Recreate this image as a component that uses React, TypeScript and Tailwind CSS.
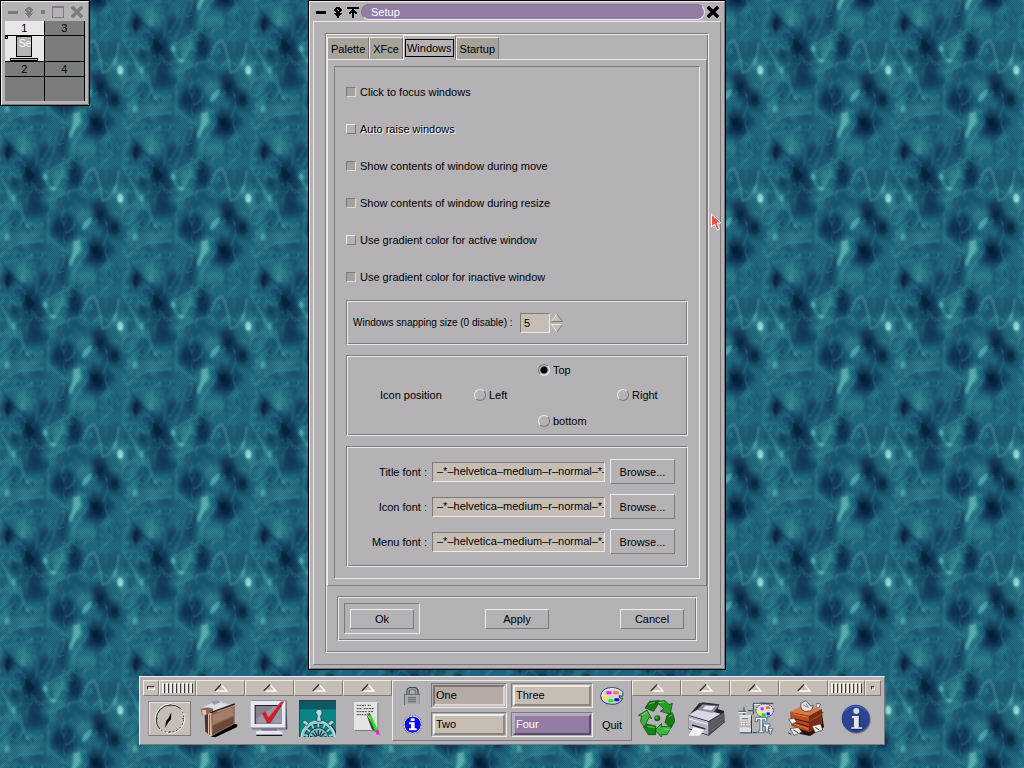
import React from "react";

const etched =
  "border border-t-[#7b797b] border-l-[#7b797b] border-r-[#efebe7] border-b-[#efebe7] shadow-[inset_1px_1px_0_#efebe7,inset_-1px_-1px_0_#7b797b]";
const raised =
  "border border-t-[#efebe7] border-l-[#efebe7] border-r-[#7b797b] border-b-[#7b797b]";
const sunken =
  "border border-t-[#7b797b] border-l-[#7b797b] border-r-[#efebe7] border-b-[#efebe7]";

/* ---------- wallpaper ---------- */

const offsets = [-384, 0, 384];

function Wallpaper() {
  return (
    <svg className="absolute inset-0 h-full w-full" aria-hidden="true">
      <defs>
        <filter id="soft" x="-20%" y="-20%" width="140%" height="140%">
          <feGaussianBlur stdDeviation="10" />
        </filter>
        <filter id="mid" x="-20%" y="-20%" width="140%" height="140%">
          <feGaussianBlur stdDeviation="7" />
        </filter>
        <filter id="fine" x="-20%" y="-20%" width="140%" height="140%">
          <feGaussianBlur stdDeviation="3.5" />
        </filter>
        <filter id="mottle" filterUnits="userSpaceOnUse" x="0" y="0" width="128" height="128" colorInterpolationFilters="sRGB">
          <feTurbulence type="turbulence" baseFrequency=".047 .031" numOctaves="3" seed="8" stitchTiles="stitch" />
          <feColorMatrix values="0 0 0 0 .27  0 0 0 0 .66  0 0 0 0 .67  -5 0 0 0 1" />
        </filter>
        <filter id="shade" filterUnits="userSpaceOnUse" x="0" y="0" width="128" height="128" colorInterpolationFilters="sRGB">
          <feTurbulence type="fractalNoise" baseFrequency=".063 .047" numOctaves="3" seed="3" stitchTiles="stitch" />
          <feColorMatrix values="0 0 0 0 .03  0 0 0 0 .16  0 0 0 0 .28  5 0 0 0 -2.3" />
        </filter>
        <g id="tileDark" fill="#10365a">
          <ellipse cx="24" cy="72" rx="20" ry="30" />
          <path d="M60 85 L110 95 L130 140 L125 225 L90 215 L70 150Z" />
          <path d="M228 85 L255 130 L240 180 L205 175 L200 130Z" />
          <path d="M165 260 L225 255 L230 330 L190 350 L150 310Z" />
          <path d="M265 220 L310 215 L345 270 L370 310 L340 335 L290 290Z" />
          <ellipse cx="290" cy="5" rx="38" ry="26" />
          <ellipse cx="290" cy="365" rx="42" ry="28" />
          <path d="M60 210 L130 220 L150 250 L90 270Z" />
          <path d="M120 45 L150 50 L140 110 L110 90Z" />
          <ellipse cx="345" cy="65" rx="16" ry="22" opacity=".7" />
          <ellipse cx="345" cy="150" rx="12" ry="30" opacity=".7" />
          <ellipse cx="115" cy="352" rx="26" ry="14" opacity=".7" />
          <ellipse cx="190" cy="45" rx="14" ry="40" />
          <ellipse cx="45" cy="165" rx="18" ry="22" />
          <ellipse cx="40" cy="270" rx="16" ry="22" opacity=".7" />
        </g>
        <g id="tileBlack" fill="#041a2e">
          <ellipse cx="23" cy="72" rx="10" ry="18" />
          <path d="M74 112 L94 124 L108 142 L98 166 L84 158 L72 132Z" />
          <ellipse cx="225" cy="135" rx="10" ry="26" opacity=".5" />
          <ellipse cx="343" cy="298" rx="11" ry="14" />
          <path d="M290 244 L308 248 L316 268 L306 284 L288 270Z" opacity=".6" />
          <path d="M270 356 L296 350 L308 372 L304 396 L280 390Z" />
          <ellipse cx="180" cy="300" rx="12" ry="22" opacity=".3" />
        </g>
        <g id="tileLight" fill="#328a92">
          <path d="M130 140 L215 88 L185 150 L160 192 L140 175Z" />
          <path d="M50 25 L90 15 L100 60 L70 80 L50 55Z" />
          <path d="M205 0 L235 0 L245 50 L275 40 L290 70 L220 80Z" opacity=".9" />
          <path d="M215 245 L265 240 L275 265 L235 285Z" opacity=".8" />
          <path d="M335 190 L380 180 L384 240 L345 262 L318 235Z" />
          <ellipse cx="318" cy="140" rx="11" ry="24" opacity=".8" />
          <ellipse cx="22" cy="325" rx="16" ry="30" />
          <ellipse cx="345" cy="70" rx="7" ry="20" opacity=".7" />
          <path d="M210 384 L220 335 L245 330 L260 384Z" />
          <path d="M0 265 L45 220 L10 290Z" />
          <path d="M55 355 L120 325 L100 290 L60 310Z" opacity=".8" />
          <path d="M20 190 L60 200 L70 235 L40 240Z" opacity=".7" />
          <path d="M130 200 L200 195 L170 235 L130 260Z" opacity=".4" />
        </g>
        <g id="tileLines" fill="none" stroke="#46a3a5" strokeWidth="6" strokeLinecap="round">
          <path d="M133 140 C140 165 150 180 160 184 C172 172 180 150 190 130" />
          <path d="M130 138 C155 125 185 112 218 86" opacity=".6" />
          <path d="M250 165 C262 130 270 122 282 122 C296 130 300 190 308 218 C325 218 335 200 350 170 L356 130" />
          <path d="M5 150 C15 165 20 200 45 218" opacity=".8" />
          <path d="M62 225 C65 255 70 280 88 300" opacity=".5" />
          <path d="M0 384 C30 350 60 340 130 338" opacity=".7" />
          <path d="M146 345 C140 300 150 280 146 270 M150 330 C165 350 195 365 212 380" opacity=".5" />
          <path d="M160 215 C190 190 220 190 250 178" opacity=".5" />
          <path d="M0 30 C25 15 60 5 110 5 C150 10 150 20 152 45" opacity=".3" />
          <path d="M175 15 C165 50 160 80 145 110" opacity=".4" />
          <path d="M100 45 C120 60 110 85 108 110" opacity=".4" />
          <path d="M370 55 C376 80 366 100 372 120" opacity=".5" />
          <path d="M320 20 C300 50 280 50 275 90" opacity=".3" />
          <path d="M0 320 C15 300 30 290 45 270" opacity=".5" />
        </g>
        <g id="tileBright" fill="#6cc9c4">
          <ellipse cx="361" cy="211" rx="9" ry="14" fill="#a4f4e8" />
          <ellipse cx="260" cy="287" rx="8" ry="23" transform="rotate(38 260 287)" opacity=".7" />
          <ellipse cx="217" cy="10" rx="7" ry="22" transform="rotate(20 217 10)" opacity=".8" />
          <path d="M220 340 L240 335 L242 365 L228 388 L220 388Z" opacity=".8" />
          <ellipse cx="136" cy="146" rx="5" ry="9" opacity=".8" />
          <ellipse cx="160" cy="182" rx="9" ry="5" opacity=".8" />
          <ellipse cx="346" cy="184" rx="4" ry="13" transform="rotate(15 346 184)" opacity=".7" />
          <ellipse cx="40" cy="210" rx="6" ry="10" opacity=".5" />
          <ellipse cx="22" cy="326" rx="6" ry="12" opacity=".6" />
          <ellipse cx="82" cy="292" rx="5" ry="6" opacity=".5" />
          <ellipse cx="68" cy="68" rx="7" ry="12" opacity=".3" />
        </g>
        <pattern id="water" width="128" height="128" patternUnits="userSpaceOnUse">
          <rect width="128" height="128" fill="#226a82" />
          <g transform="scale(.33333)">
            {[
              ["tileDark", "soft", 0.85],
              ["tileLight", "soft", 0.9],
            ].map(([id, filter, opacity]) => (
              <g key={id} filter={`url(#${filter})`} opacity={opacity}>
                {offsets.map((x) =>
                  offsets.map((y) => <use key={`${x} ${y}`} href={`#${id}`} x={x} y={y} />)
                )}
              </g>
            ))}
          </g>
          <rect width="128" height="128" filter="url(#shade)" opacity=".28" />
          <rect width="128" height="128" filter="url(#mottle)" opacity=".3" />
          <g transform="scale(.33333)">
            {[
              ["tileBlack", "mid", 0.9],
              ["tileLines", "fine", 0.7],
              ["tileBright", "fine", 0.9],
            ].map(([id, filter, opacity]) => (
              <g key={id} filter={`url(#${filter})`} opacity={opacity}>
                {offsets.map((x) =>
                  offsets.map((y) => <use key={`${x} ${y}`} href={`#${id}`} x={x} y={y} />)
                )}
              </g>
            ))}
          </g>
        </pattern>
        <pattern id="dither" width="2" height="2" patternUnits="userSpaceOnUse">
          <path d="M0 0h1v1H0zM1 1h1v1H1z" fill="#001828" opacity=".1" />
        </pattern>
      </defs>
      <rect width="100%" height="100%" fill="url(#water)" />
      <rect width="100%" height="100%" fill="url(#dither)" />
    </svg>
  );
}

/* ---------- window glyphs ---------- */

function Dash() {
  return (
    <svg width="10" height="13" viewBox="0 0 10 13" fill="currentColor" shapeRendering="crispEdges">
      <path d="M0 5h10v3H0z" />
    </svg>
  );
}

function Pin() {
  return (
    <svg width="8" height="13" viewBox="0 0 8 13" fill="currentColor" shapeRendering="crispEdges">
      <path
        fillRule="evenodd"
        d="M2 1h4v1h1v1h1v2H7v1H6v1h2v1H7v1H6v1H5v2H3v-2H2V9H1V8H0V7h2V6H1V5H0V3h1V2h1zM3 3v1h1V3zM4 4v1h1V4z"
      />
    </svg>
  );
}

function Shade() {
  return (
    <svg width="12" height="13" viewBox="0 0 12 13" fill="currentColor" shapeRendering="crispEdges">
      <path d="M0 1h12v2H0zM5 3h2v1h1v1h1v1h1v2H8V7H7v5H5V7H4v1H2V6h1V5h1V4h1z" />
    </svg>
  );
}

function Cross() {
  return (
    <svg width="12" height="12" viewBox="0 0 12 12" fill="none" stroke="currentColor">
      <path d="M2 2l8 8M10 2l-8 8" strokeWidth="3.400" strokeLinecap="square" />
    </svg>
  );
}

/* ---------- pager ---------- */

function Pager() {
  return (
    <section className="absolute left-0 top-0 w-[90px] border border-black">
      <div className="border border-t-[#f7ebf7] border-l-[#f7ebf7] border-r-[#7b797b] border-b-[#7b797b] bg-[#b5b2b5] px-[3px] pb-[3px]">
        <header className="flex h-[19px] items-center justify-between pl-[3px] pr-[2px] pt-px text-[#7b7d7b]">
          <Dash />
          <Pin />
          <span className="size-1 bg-[#7b7d7b]" />
          <span className="size-3 border border-t-2 border-[#7b7d7b]" />
          <Cross />
        </header>
        <div className="grid grid-cols-2 border-r border-black bg-[#7b7d7b] text-center text-[11px] leading-[14px]">
          <div className="border-r border-b border-black bg-[#e7e7e7]">1</div>
          <div className="border-b border-black">3</div>
          <div className="relative h-[26px] border-r border-b border-black bg-[#e7e7e7]">
            <span className="absolute left-0 top-0 size-[3px] border border-black" />
            <span className="absolute left-[11px] top-0 h-[21px] w-4 overflow-hidden border border-black bg-[#b5b2b5] pl-[2px] text-[10px] leading-[14px] text-white">
              Se
            </span>
            <span className="absolute bottom-0 left-[5px] h-[3px] w-7 border border-black bg-[#b5b2b5]" />
          </div>
          <div className="border-b border-black" />
          <div className="border-r border-b border-black">2</div>
          <div className="border-b border-black">4</div>
          <div className="h-[24px] border-r border-black" />
          <div />
        </div>
      </div>
    </section>
  );
}

/* ---------- setup dialog ---------- */

const options = [
  { label: "Click to focus windows", checked: true },
  { label: "Auto raise windows", checked: false, lit: true },
  { label: "Show contents of window during move", checked: true },
  { label: "Show contents of window during resize", checked: true },
  { label: "Use gradient color for active window", checked: false },
  { label: "Use gradient color for inactive window", checked: true },
];

function Tab({ children }: { children: React.ReactNode }) {
  return (
    <button className="h-[22px] border border-b-0 border-t-[#efebe7] border-l-[#efebe7] border-r-[#7b797b] bg-[#a5a29a] px-[3px]">
      {children}
    </button>
  );
}

function Radio({ label, checked }: { label: string; checked?: boolean }) {
  return (
    <label className="flex items-center gap-[3px]">
      <input
        type="radio"
        name="icon-position"
        defaultChecked={checked}
        className="size-3 appearance-none rounded-full border border-t-[#efebe7] border-l-[#efebe7] border-r-[#7b797b] border-b-[#7b797b] bg-[#b5b2b5] checked:border-t-[#7b797b] checked:border-l-[#7b797b] checked:border-r-[#efebe7] checked:border-b-[#efebe7] checked:bg-[radial-gradient(circle,#000_3px,#b5b2b5_4px)]"
      />
      {label}
    </label>
  );
}

function FontRow({ label, id }: { label: string; id: string }) {
  return (
    <div className="flex items-center gap-[5px]">
      <label htmlFor={id} className="w-[79px] text-right">
        {label}
      </label>
      <input
        id={id}
        type="text"
        defaultValue="–*–helvetica–medium–r–normal–*–*–120–*–*–*–*–*–*"
        className={`h-5 min-w-0 flex-1 bg-[#c6beb5] pl-1 pb-px outline-none ${sunken}`}
      />
      <button className={`h-[25px] w-[65px] ${raised}`}>Browse...</button>
    </div>
  );
}

function SetupWindow() {
  return (
    <section className="absolute left-[308px] top-0 w-[418px] border border-black">
      <div className="border border-t-[#f7ebf7] border-l-[#f7ebf7] border-r-[#7b797b] border-b-[#7b797b] bg-[#b5b2b5] px-[3px] pb-[3px]">
        <header className="flex h-[19px] items-center pl-[3px] pt-px">
          <button aria-label="Iconify">
            <Dash />
          </button>
          <button aria-label="Stick" className="ml-2">
            <Pin />
          </button>
          <button aria-label="Shade" className="ml-[5px]">
            <Shade />
          </button>
          <h1 className="ml-[2px] h-4 flex-1 rounded-full border border-t-[#7b797b] border-l-[#7b797b] border-r-[#f7ebf7] border-b-[#f7ebf7] bg-[#947da5] pl-[9px] leading-[14px] text-white">
            Setup
          </h1>
          <button aria-label="Close" className="mx-[2px]">
            <Cross />
          </button>
        </header>

        <div className={`p-[11px] ${raised}`}>
          <div className={`p-px ${etched}`}>
            <nav className="flex items-end">
              <Tab>Palette</Tab>
              <Tab>XFce</Tab>
              <button className="relative z-10 -mb-px h-[25px] border border-b-0 border-t-[#efebe7] border-l-[#efebe7] border-r-[#7b797b] bg-[#b5b2b5] px-px">
                <span className="block border border-black px-px py-px">Windows</span>
              </button>
              <Tab>Startup</Tab>
            </nav>

            <div className={`p-[6px] ${raised}`}>
              <div className={`flex flex-col gap-[10px] px-[11px] pb-[11px] pt-[6px] ${sunken}`}>
                <div className="-mb-[5px]">
                  {options.map((o) => (
                    <label key={o.label} className="flex h-[37px] items-center gap-1">
                      <input
                        type="checkbox"
                        defaultChecked={o.checked}
                        className="size-[10px] appearance-none border border-t-[#efebe7] border-l-[#efebe7] border-r-[#7b797b] border-b-[#7b797b] checked:border-t-[#7b797b] checked:border-l-[#7b797b] checked:border-r-[#dedbd6] checked:border-b-[#dedbd6] checked:bg-[#a5a29a]"
                      />
                      <span className={o.lit ? "[text-shadow:1px_1px_0_#fff]" : ""}>{o.label}</span>
                    </label>
                  ))}
                </div>

                <div className={`flex h-[45px] items-center pl-[6px] ${etched}`}>
                  <label htmlFor="snap" className="w-[167px] whitespace-nowrap text-[10px]">
                    Windows snapping size (0 disable) :
                  </label>
                  <input
                    id="snap"
                    type="text"
                    defaultValue="5"
                    className={`h-5 w-[30px] bg-[#c6beb5] pl-[3px] outline-none ${sunken}`}
                  />
                  <svg className="ml-px" width="12" height="20" viewBox="0 0 12 20">
                    <path d="M6 1L.5 8.500H11.500z" fill="#c6beb5" />
                    <path d="M.5 8.500L6 1" stroke="#efebe7" />
                    <path d="M6 1l5.500 7.500H.5" stroke="#7b797b" fill="none" />
                    <path d="M.5 11.500H11.500L6 19z" fill="#c6beb5" />
                    <path d="M11.500 11.500H.5L6 19" stroke="#efebe7" fill="none" />
                    <path d="M11.500 11.500L6 19" stroke="#7b797b" />
                  </svg>
                </div>

                <div
                  role="radiogroup"
                  aria-label="Icon position"
                  className={`grid h-[81px] grid-cols-[127fr_64fr_79fr_70fr] grid-rows-3 items-center py-px ${etched}`}
                >
                  <span className="col-start-1 row-start-2 pl-[33px]">Icon position</span>
                  <div className="col-start-3 row-start-1">
                    <Radio label="Top" checked />
                  </div>
                  <div className="col-start-2 row-start-2">
                    <Radio label="Left" />
                  </div>
                  <div className="col-start-4 row-start-2">
                    <Radio label="Right" />
                  </div>
                  <div className="col-start-3 row-start-3">
                    <Radio label="bottom" />
                  </div>
                </div>

                <div className={`flex flex-col gap-[10px] py-3 pl-px pr-3 ${etched}`}>
                  <FontRow label="Title font :" id="title-font" />
                  <FontRow label="Icon font :" id="icon-font" />
                  <FontRow label="Menu font :" id="menu-font" />
                </div>
              </div>
            </div>

            <div className={`m-[10px] flex items-center justify-between px-[6px] py-[6px] ${etched}`}>
              <div className={`px-[5px] pb-1 pt-[5px] ${sunken}`}>
                <button className={`block h-5 w-[64px] ${raised}`}>Ok</button>
              </div>
              <button className={`h-5 w-[64px] ${raised}`}>Apply</button>
              <div className="px-[6px]">
                <button className={`block h-5 w-[64px] ${raised}`}>Cancel</button>
              </div>
            </div>
          </div>
        </div>
      </div>
    </section>
  );
}

/* ---------- panel icons ---------- */

function ClockIcon() {
  return (
    <svg width="43" height="35" viewBox="39 87 129 105">
      <rect x="40.500" y="88.500" width="126" height="102" fill="#c6beb5" stroke="#7b797b" strokeWidth="3" />
      <path d="M43 189V91H165" fill="none" stroke="#efebe7" strokeWidth="3" />
      <circle cx="105" cy="140" r="44" fill="#c6beb5" stroke="#fff" strokeWidth="3" />
      <path d="M74 171A44 44 0 0 1 136 109" fill="none" stroke="#222" strokeWidth="3" />
      <path d="M136 109A44 44 0 0 1 74 171" fill="none" stroke="#222" strokeWidth="3" strokeDasharray="5 7" />
      <path d="M109 121L108 142L99 152L90 168L93 148L101 137Z" fill="#000" />
      <path d="M105 99v4M105 177v4M64 140h4M142 140h4" stroke="#222" strokeWidth="3" />
    </svg>
  );
}

function FolderIcon() {
  return (
    <svg width="38" height="38" viewBox="200 82 114 114">
      <path d="M232 192L300 152L313 156L310 164L246 194Z" fill="#000" />
      <path d="M204 108L214 100L258 84L270 92L300 98L232 126L206 124Z" fill="#dcdce4" />
      <path d="M202 110Q214 100 240 108L238 122L206 128Z" fill="#8d6650" />
      <path d="M206 112h12v14h-10z" fill="#d8c8b8" />
      <path d="M232 86l20-3 10 6-20 8z" fill="#9a9aa8" />
      <path d="M222 124L234 122L236 192L222 182Z" fill="#e0bfa8" />
      <path d="M214 128L224 124L224 184L216 176Z" fill="#4a3028" />
      <path d="M228 126L232 126L232 188L228 186Z" fill="#3a241c" />
      <path d="M232 120L304 94L304 154L236 190Z" fill="#8c6450" />
      <path d="M238 128L300 104L300 128L238 156Z" fill="#a47e6a" />
      <path d="M238 160L300 132L300 152L238 186Z" fill="#6c4838" />
      <path d="M232 120L304 94" stroke="#281c18" strokeWidth="4" />
      <path d="M250 118L304 99" stroke="#d8b8a4" strokeWidth="2" />
      <path d="M232 122V190" stroke="#e8cdb8" strokeWidth="3" />
    </svg>
  );
}

function MonitorIcon() {
  return (
    <svg width="38" height="37" viewBox="349 84 114 111">
      <path d="M354 86H458L461 172H356Z" fill="#20202c" />
      <rect x="351" y="87" width="105" height="81" rx="3" fill="#e4e8f4" />
      <path d="M351 168L456 168L456 88" fill="none" stroke="#9ca0b0" strokeWidth="4" />
      <rect x="363" y="99" width="80" height="57" fill="#202028" />
      <rect x="366" y="102" width="77" height="54" fill="#84808c" />
      <path d="M368 140L420 104H443V154H368Z" fill="#9c98a4" />
      <path d="M384 170H430V178H384Z" fill="#70748a" />
      <path d="M366 180L376 176H438L448 184L442 190H370Z" fill="#e4e8f4" />
      <path d="M368 190H446" stroke="#181820" strokeWidth="4" />
      <path d="M385 124L395 118L404 136L440 90L450 87L410 150L400 152Z" fill="#ce1c28" />
      <path d="M404 136L442 90" stroke="#ff8080" strokeWidth="2" />
      <path d="M398 152L410 152L450 89" fill="none" stroke="#600810" strokeWidth="2" />
    </svg>
  );
}

function WheelIcon() {
  const spokes = [-75, -50, -25, 0, 25, 50, 75];
  return (
    <svg width="37" height="37" viewBox="495 84 111 111">
      <rect x="495" y="84" width="111" height="111" fill="#0b8484" />
      <rect x="495" y="84" width="111" height="28" fill="#0a5a68" />
      <path d="M495 195V86H606" fill="none" stroke="#303840" strokeWidth="5" />
      <circle cx="555" cy="202" r="50" fill="none" stroke="#0a3440" strokeWidth="13" />
      <circle cx="553" cy="200" r="49" fill="none" stroke="#9cc6c8" strokeWidth="9" />
      <circle cx="552" cy="198" r="51" fill="none" stroke="#e4f4f4" strokeWidth="2" />
      {spokes.map((a) => (
        <path key={a} d="M553 190V154" stroke="#a8d0d0" strokeWidth="5" transform={`rotate(${a} 553 200)`} />
      ))}
      <circle cx="553" cy="198" r="32" fill="#0a4450" />
      <circle cx="553" cy="198" r="29" fill="#8cbcc0" />
      {spokes.map((a) => (
        <path key={a} d="M553 192V174" stroke="#103c48" strokeWidth="4" transform={`rotate(${a} 553 200)`} />
      ))}
      <path d="M548 148L550 130L545 122Q548 110 555 112Q566 114 564 124L560 132L562 148Z" fill="#b8dcdc" stroke="#0a3440" strokeWidth="2" />
      <path d="M504 150l10-6 10 10-6 8zM602 150l-10-6-10 10 6 8z" fill="#a8d4d4" stroke="#0a3440" strokeWidth="2" />
    </svg>
  );
}

function NoteIcon() {
  return (
    <svg width="28" height="35" viewBox="660 92 84 105">
      <path d="M666 98H736V182H666Z" fill="#7b797b" />
      <rect x="663" y="95" width="70" height="84" fill="#e4e4e4" />
      <path d="M671 105h28M704 105h10M671 115h16M692 115h30M671 124h30M706 124h16M671 133h20M694 133h10" stroke="#404040" strokeWidth="3" strokeDasharray="6 2" />
      <path d="M700 132L738 190L744 196L716 176Z" fill="#404040" />
      <path d="M705 133L713 131L734 180L727 184Z" fill="#18e818" />
      <path d="M702 130l8-2 3 6-7 3z" fill="#606060" />
      <path d="M727 181l10-2 2 12-8 3z" fill="#e818e8" />
    </svg>
  );
}

function RecycleIcon() {
  return (
    <svg width="37" height="37" viewBox="41 82 111 111">
      <g stroke="#083808" strokeWidth="2" strokeLinejoin="round">
        <path d="M62 106L76 86L104 84L98 100L88 116Z" fill="#127812" />
        <path d="M94 86L122 84L134 96L144 92L138 124L108 116L118 108Z" fill="#28a028" />
        <path d="M128 128L144 120L152 144L140 166L122 150Z" fill="#108010" />
        <path d="M142 160L128 186H112V194L92 172L112 152V162Z" fill="#38b838" />
        <path d="M94 160V186H72L58 164L66 154Z" fill="#128812" />
        <path d="M42 128L68 112L82 138L74 134L60 164L48 146L52 130Z" fill="#40b040" />
      </g>
      <circle cx="99" cy="137" r="9" fill="#106010" />
      <circle cx="97" cy="135" r="4" fill="#40b840" />
      <path d="M74 94l18-6M104 90l16-2M134 132l10-6M118 170l20 0M70 162l20 2M52 128l16-10" stroke="#90e890" strokeWidth="3" opacity=".7" />
    </svg>
  );
}

function PrinterIcon() {
  return (
    <svg width="37" height="36" viewBox="188 86 111 108">
      <path d="M190 130L222 92L296 116L298 150L250 190L190 170Z" fill="#202028" />
      <path d="M190 128L222 108L286 124L250 146Z" fill="#d8d8e4" />
      <path d="M220 96L232 90L282 96L274 120L216 112Z" fill="#303038" />
      <path d="M232 96L280 100L262 122L216 112Z" fill="#8c8c9c" />
      <path d="M240 100L270 102L258 114L232 110Z" fill="#e4e4f0" />
      <path d="M190 130L250 148V188L190 168Z" fill="#b4b4c4" />
      <path d="M250 148L296 120V150L250 188Z" fill="#54545f" />
      <path d="M192 140L248 156" stroke="#f8f8ff" strokeWidth="3" />
      <path d="M200 158L240 170" stroke="#303038" strokeWidth="5" />
      <path d="M204 164L238 172L222 190L190 190Z" fill="#f4f4fa" />
      <path d="M256 152l36-24M256 164l38-26M256 176l36-26" stroke="#84848f" strokeWidth="2" />
    </svg>
  );
}

function ToolsIcon() {
  return (
    <svg width="36" height="34" viewBox="334 92 108 102">
      <path d="M336 120h22M364 118h14M380 96h36M380 96v34M352 108v24M378 184h14M414 176h20M400 96h40" stroke="#184060" strokeWidth="3" />
      <path d="M336 123h22M382 99h34" stroke="#fff" strokeWidth="3" />
      <rect x="340" y="132" width="36" height="54" fill="#184060" />
      <rect x="339" y="131" width="34" height="52" fill="#dedede" />
      <path d="M339 148h34v20h-34z" fill="#b5b2b5" />
      <path d="M342 153h28M342 160h28" stroke="#fff" strokeWidth="4" strokeDasharray="5 3" />
      <path d="M345 142h20" stroke="#184060" strokeWidth="2" />
      <ellipse cx="414" cy="118" rx="26" ry="20" fill="#dedede" stroke="#184060" strokeWidth="3" strokeDasharray="5 3" />
      <rect x="402" y="108" width="9" height="9" fill="#f018f0" />
      <rect x="418" y="105" width="11" height="8" fill="#f86848" />
      <rect x="393" y="120" width="9" height="9" fill="#f8f818" />
      <rect x="405" y="126" width="12" height="9" fill="#18d818" />
      <rect x="420" y="123" width="9" height="9" fill="#1818f0" />
      <path d="M386 138h34v13h-6v-6h-7v34h5v5h-17v-5h5v-34h-8v6h-6z" fill="#fff" stroke="#184060" strokeWidth="2" />
      <path d="M410 158h20v8h-5v16h-8v-16h-7zM424 172h14v6h-4v10h-5v-10h-5z" fill="#fff" stroke="#184060" strokeWidth="2" />
    </svg>
  );
}

function DrawersIcon() {
  return (
    <svg width="38" height="38" viewBox="481 82 114 114">
      <path d="M494 120L520 184L550 190L592 164L584 108Z" fill="#281008" />
      <path d="M490 118L530 98L586 110L548 130Z" fill="#d87848" />
      <path d="M490 118L548 130V178L494 160Z" fill="#b44c20" />
      <path d="M548 130L586 110V154L548 180Z" fill="#7c2c10" />
      <path d="M494 136L548 150M494 146L546 162" stroke="#401408" strokeWidth="3" />
      <path d="M500 124L544 134M502 154l42 14" stroke="#e89060" strokeWidth="2" />
      <path d="M552 144l32-18" stroke="#c86838" strokeWidth="2" />
      <path d="M522 92L538 84L552 100L560 98L554 114L534 116L524 110Z" fill="#e8e4e0" stroke="#302828" strokeWidth="2" />
      <path d="M530 96l12 8M538 92l8 14" stroke="#504840" strokeWidth="2" />
      <path d="M486 140l16-4 8 12-14 6zM490 168L514 164L526 178L502 188ZM556 160L582 154L588 172L566 180ZM570 92l12 2-6 12-8-4z" fill="#f0ece8" stroke="#403830" strokeWidth="2" />
      <path d="M500 172l14 8M566 164l12 8M484 180l10 6M578 122l12-2" stroke="#403830" strokeWidth="3" />
    </svg>
  );
}

function InfoLarge() {
  return (
    <svg width="30" height="30" viewBox="643 94 90 90">
      <circle cx="690" cy="141" r="42" fill="#687080" />
      <circle cx="687" cy="138" r="42" fill="#2c4490" />
      <path d="M655 116A42 42 0 0 1 720 116" fill="none" stroke="#506cb8" strokeWidth="3" />
      <circle cx="689" cy="115" r="9" fill="#d8d8e4" />
      <path d="M676 130H698V164H706V170H674V164H682V137H676Z" fill="#e4e4ec" />
      <path d="M698 130V164M706 170H674" stroke="#101c48" strokeWidth="3" fill="none" />
    </svg>
  );
}

function LockIcon() {
  return (
    <svg width="17" height="18" viewBox="41 44 51 54">
      <path d="M53 66V56Q54 48 66 48Q80 48 80 58V66" fill="none" stroke="#284058" strokeWidth="10" />
      <path d="M53 66V57Q54 49 66 49Q79 49 79 58V66" fill="none" stroke="#a0a0a0" strokeWidth="5" />
      <rect x="42.500" y="66" width="47" height="30" fill="#a8a8a8" stroke="#586878" strokeWidth="3" />
      <path d="M44 96H91V66" fill="none" stroke="#efebe7" strokeWidth="2" />
      <path d="M53 76h24M53 82h24M53 88h24" stroke="#606060" strokeWidth="3" />
    </svg>
  );
}

function InfoSmall() {
  return (
    <svg width="19" height="19" viewBox="35 128 57 57">
      <circle cx="64" cy="157" r="26" fill="#0808f0" stroke="#fff" strokeWidth="3" />
      <circle cx="64" cy="157" r="27.500" fill="none" stroke="#184060" strokeWidth="2" strokeDasharray="5 4" />
      <rect x="58" y="138" width="12" height="8" fill="#fff" />
      <path d="M53 150H70V168H76V174H53V168H59V156H53Z" fill="#fff" />
    </svg>
  );
}

function PaletteIcon() {
  return (
    <svg width="24" height="18" viewBox="633 44 72 54">
      <path d="M668 46Q690 46 702 60L701 72L690 70Q690 80 701 78Q694 96 668 96Q636 94 635 71Q638 46 668 46Z" fill="#d6d3d6" stroke="#184060" strokeWidth="3" />
      <path d="M668 49Q688 49 699 61M638 72Q642 50 668 49" fill="none" stroke="#fff" strokeWidth="3" strokeDasharray="6 3" />
      <rect x="652" y="57" width="16" height="9" rx="3" fill="#f818f8" />
      <rect x="673" y="57" width="16" height="9" rx="3" fill="#f87050" />
      <rect x="642" y="69" width="17" height="9" rx="3" fill="#f8f818" />
      <rect x="658" y="81" width="16" height="9" rx="3" fill="#18f818" />
      <rect x="676" y="78" width="15" height="9" rx="3" fill="#1010f8" />
    </svg>
  );
}

/* ---------- panel ---------- */

const capButton =
  "flex h-4 items-center justify-center border border-t-[#efebe7] border-l-[#efebe7] border-r-[#7b797b] border-b-[#7b797b] bg-[#c6beb5]";

function MenuArrow({ label }: { label: string }) {
  return (
    <button aria-label={label} className={`flex-1 ${capButton}`}>
      <svg width="14" height="8" viewBox="0 0 14 8" fill="none">
        <path d="M7.500 1L13 7H1" stroke="#fff" strokeWidth="1.300" />
        <path d="M7 .5L.8 7" stroke="#303030" strokeWidth="1.300" />
      </svg>
    </button>
  );
}

function Grip() {
  return (
    <div className={`w-[37px] gap-px ${capButton}`}>
      {[0, 1, 2, 3, 4, 5, 6, 7].map((n) => (
        <span key={n} className="h-[10px] w-[3px] border-t border-r border-t-white border-r-[#393839] bg-[#efebe7]" />
      ))}
    </div>
  );
}

function Launcher({ label, children }: { label: string; children: React.ReactNode }) {
  return (
    <button aria-label={label} className="flex flex-1 items-center justify-center">
      {children}
    </button>
  );
}

function Desk({ label, look }: { label: string; look: string }) {
  return (
    <div className={`p-px ${sunken}`}>
      <button className={`block h-[21px] w-full border-2 pl-px text-left leading-[17px] ${look}`}>{label}</button>
    </div>
  );
}

const deskIdle = "border-t-[#efebe7] border-l-[#efebe7] border-r-[#8c867b] border-b-[#8c867b] bg-[#c6beb5]";
const deskPressed = "border-t-[#7b7573] border-l-[#7b7573] border-r-[#ded7d6] border-b-[#ded7d6] bg-[#b5aaa5]";
const deskActive = "border-t-[#b5aac6] border-l-[#b5aac6] border-r-[#5a4d6b] border-b-[#5a4d6b] bg-[#947da5] text-white";

function Panel() {
  return (
    <section className="absolute left-[139px] top-[676px] flex w-[746px] border border-t-[#efebe7] border-l-[#efebe7] border-r-[#7b797b] border-b-[#7b797b] bg-[#b5b2b5] p-[3px]">
      <div className="flex flex-1 flex-col">
        <div className="flex">
          <button aria-label="Hide" className={`w-4 ${capButton}`}>
            <span className="h-1 w-2 border border-t-[#393839] border-l-[#393839] border-r-white border-b-white" />
          </button>
          <Grip />
          <MenuArrow label="Clock menu" />
          <MenuArrow label="Files menu" />
          <MenuArrow label="Monitor menu" />
          <MenuArrow label="Network menu" />
        </div>
        <div className="flex flex-1 pl-[2px]">
          <Launcher label="Clock">
            <ClockIcon />
          </Launcher>
          <Launcher label="Files">
            <FolderIcon />
          </Launcher>
          <Launcher label="Monitor">
            <MonitorIcon />
          </Launcher>
          <Launcher label="Network">
            <WheelIcon />
          </Launcher>
          <Launcher label="Editor">
            <NoteIcon />
          </Launcher>
        </div>
      </div>

      <div className={`grid w-[240px] grid-cols-[38px_76px_86px_38px] grid-rows-2 items-center gap-y-1 pb-[3px] pt-[2px] ${raised}`}>
        <button aria-label="Lock" className="justify-self-center">
          <LockIcon />
        </button>
        <Desk label="One" look={deskPressed} />
        <div className="pl-1">
          <Desk label="Three" look={deskIdle} />
        </div>
        <button aria-label="Palette" className="justify-self-center">
          <PaletteIcon />
        </button>
        <button aria-label="Info" className="justify-self-center">
          <InfoSmall />
        </button>
        <Desk label="Two" look={deskIdle} />
        <div className="pl-1">
          <Desk label="Four" look={deskActive} />
        </div>
        <button className="justify-self-center">Quit</button>
      </div>

      <div className="flex flex-1 flex-col">
        <div className="flex">
          <MenuArrow label="Trash menu" />
          <MenuArrow label="Printer menu" />
          <MenuArrow label="Settings menu" />
          <MenuArrow label="Applications menu" />
          <Grip />
          <button aria-label="Iconify panel" className={`w-4 ${capButton}`}>
            <span className="size-1 border border-t-[#393839] border-l-[#393839] border-r-white border-b-white" />
          </button>
        </div>
        <div className="flex flex-1">
          <Launcher label="Trash">
            <RecycleIcon />
          </Launcher>
          <Launcher label="Printer">
            <PrinterIcon />
          </Launcher>
          <Launcher label="Settings">
            <ToolsIcon />
          </Launcher>
          <Launcher label="Applications">
            <DrawersIcon />
          </Launcher>
          <Launcher label="Help">
            <InfoLarge />
          </Launcher>
        </div>
      </div>
    </section>
  );
}

export default function App() {
  return (
    <main className="relative min-h-screen overflow-hidden bg-[#1b5f7b] font-['Liberation_Sans',Arial,sans-serif] text-[11px] leading-[14px] text-black">
      <Wallpaper />
      <Pager />
      <SetupWindow />
      <Panel />
      <svg className="absolute left-[711px] top-[213px]" width="11" height="18" viewBox="0 0 11 18" aria-hidden="true">
        <path d="M.5 1V14L3.500 11L6 17L8.500 16L6 10H10Z" fill="#f05048" stroke="#fff" />
      </svg>
    </main>
  );
}
